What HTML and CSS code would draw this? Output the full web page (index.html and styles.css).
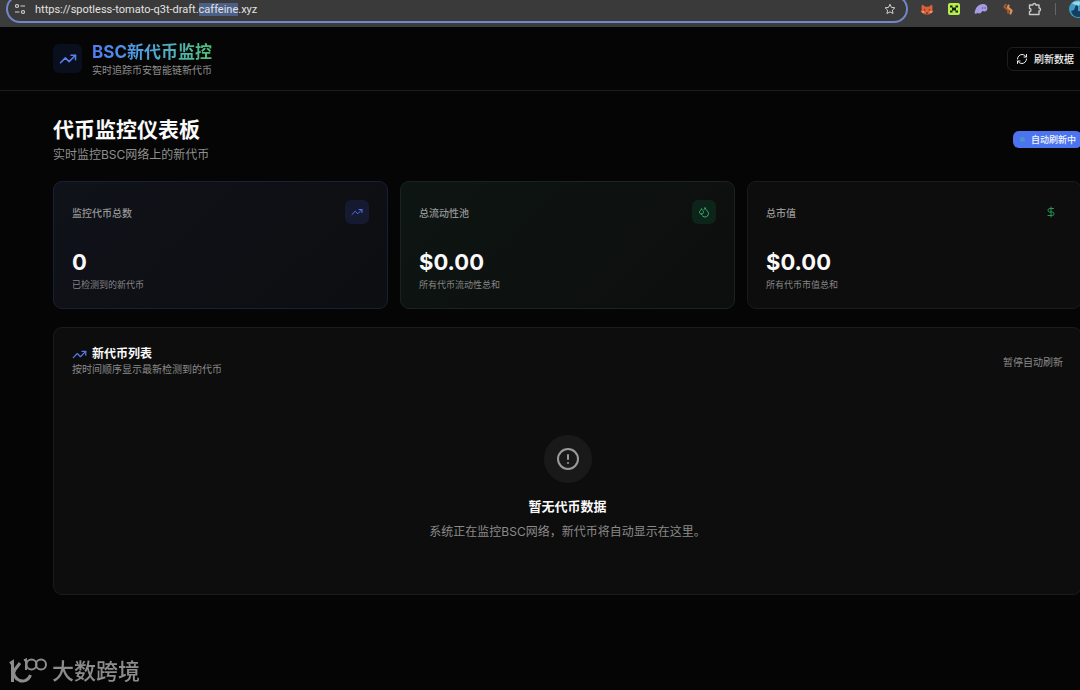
FILE: index.html
```html
<!DOCTYPE html>
<html lang="zh-CN">

<head>
    <meta charset="UTF-8">
    <meta name="viewport" content="width=device-width, initial-scale=1.0">
    <title>BSC新代币监控</title>
    <link rel="stylesheet" href="styles.css">
</head>

<body>
    <!-- shared icons -->
    <svg class="defs" aria-hidden="true">
        <symbol id="trend" viewBox="0 0 24 24">
            <path d="M16 7h6v6"/>
            <path d="m22 7-8.5 8.5-5-5L2 17"/>
        </symbol>
    </svg>

    <div class="browser">
        <div class="address">
            <svg class="tune" viewBox="0 0 12 12">
                <circle cx="3" cy="3" r="1.5"/>
                <path d="M6.500 3H11M1 9h4.500"/>
                <circle cx="9" cy="9" r="1.5"/>
            </svg>
            <input id="url" type="text" aria-label="地址" value="https://spotless-tomato-q3t-draft.caffeine.xyz" spellcheck="false">
            <svg class="star" viewBox="0 0 24 24">
                <path d="m12 2.5 2.9 6.3 6.9.8-5.1 4.7 1.4 6.8-6.1-3.4-6.1 3.4 1.4-6.8-5.1-4.7 6.9-.8z"/>
            </svg>
        </div>
        <div class="extensions">
            <svg viewBox="0 0 14 14">
                <path fill="#d9623a" d="M2 2.500l3.500 2.200h3L12 2.500l.6 3.500-.4 1.800 1.200 1.700-2.400 2L8.600 12.500H5.400L3 11.500l-2.400-2 1.200-1.700L1.400 6z"/>
                <path fill="#5c2b20" d="M3.500 7l2 .8-.6 1.200zM10.500 7l-2 .8.6 1.200zM5.800 10.500h2.400l-.5 1.200H6.300z"/>
                <path fill="#f0a070" d="M1.500 9.500l2.500-.5.500 1.500-2 .5zM12.500 9.500 10 9l-.5 1.500 2 .5z"/>
            </svg>
            <svg viewBox="0 0 14 14">
                <rect x="1" y="1" width="12" height="12" rx="2" fill="#b5ee50"/>
                <path fill="#17240a" d="M3 3.500h2.500v2H3zM8.500 3.500H11v2H8.500zM5 5.500h4v3H5zM3 8.500h2.500v2H3zM8.500 8.500H11v2H8.500z"/>
            </svg>
            <svg viewBox="0 0 14 14">
                <path fill="#a89be6" d="M.6 11.200C1.200 5.600 4.600 2 8.800 2c3.200 0 4.800 2 4.600 4.600-.2 2-1.300 3-2.800 3-1 0-1.600-.3-2-.8-.8 1.500-2 2.600-3.300 2.600-.8 0-1.200-.4-1.300-1-.8.8-1.600 1.300-2.300 1.300-.6 0-1.100-.2-1.100-.5z"/>
                <path fill="#6c62a0" d="M8.200 5h1v2h-1zM10.600 5h1v2h-1z"/>
            </svg>
            <svg viewBox="0 0 14 14">
                <path fill="none" stroke="#a5582a" stroke-width="2.200" stroke-linecap="round" d="M4.500 3 3.500 5l4 3.500-.5 2"/>
                <path fill="none" stroke="#dd9058" stroke-width="2.200" stroke-linecap="round" d="M7.500 3.500 7 5.500l3.500 3-1 3"/>
            </svg>
            <svg viewBox="0 0 14 14">
                <path fill="none" stroke="#c8c8c8" stroke-width="1.400" stroke-linejoin="round" d="M1.500 3h3.300a1.500 1.500 0 0 1 3 0H11v3a1.500 1.500 0 0 1 0 3v3.500H1.500V9.500a1.500 1.500 0 0 0 0-3z"/>
            </svg>
            <span class="divider"></span>
            <svg class="avatar" viewBox="0 0 18 18">
                <circle cx="9" cy="9" r="9" fill="#3f9cc4"/>
                <path fill="#9bd4e6" d="M3 3.500C5 1 10 .5 13 3L9 6z"/>
                <path fill="#123f63" d="M2 11l3-1 2-5 2 1v5l8 1c-1 3-4 5-8 5s-6-3-7-6z"/>
            </svg>
        </div>
    </div>

    <header class="header">
        <div class="brand">
            <span class="logo"><svg class="icon"><use href="#trend"/></svg></span>
            <div>
                <div class="brand-name">BSC新代币监控</div>
                <div class="brand-sub">实时追踪币安智能链新代币</div>
            </div>
        </div>
        <button class="refresh" type="button">
            <svg class="icon" viewBox="0 0 24 24">
                <path d="M3 12a9 9 0 0 1 9-9 9.750 9.750 0 0 1 6.740 2.740L21 8"/>
                <path d="M21 3v5h-5"/>
                <path d="M21 12a9 9 0 0 1-9 9 9.750 9.750 0 0 1-6.740-2.740L3 16"/>
                <path d="M8 16H3v5"/>
            </svg>
            刷新数据
        </button>
    </header>

    <main class="main">
        <div class="heading">
            <div>
                <h1>代币监控仪表板</h1>
                <p>实时监控BSC网络上的新代币</p>
            </div>
            <span class="badge"><i class="dot"></i>自动刷新中</span>
        </div>

        <section class="stats">
            <article class="card blue">
                <div class="card-top">
                    <h2>监控代币总数</h2>
                    <span class="card-icon"><svg class="icon"><use href="#trend"/></svg></span>
                </div>
                <div class="value">0</div>
                <p>已检测到的新代币</p>
            </article>
            <article class="card green">
                <div class="card-top">
                    <h2>总流动性池</h2>
                    <span class="card-icon">
                        <svg class="icon" viewBox="0 0 24 24">
                            <path d="M7 16.300c2.200 0 4-1.830 4-4.050 0-1.160-.57-2.260-1.710-3.190S7.290 6.750 7 5.300c-.29 1.450-1.140 2.840-2.290 3.760S3 11.100 3 12.250c0 2.220 1.800 4.050 4 4.050z"/>
                            <path d="M12.560 6.600A10.970 10.970 0 0 0 14 3.020c.5 2.500 2 4.900 4 6.500s3 3.500 3 5.500a6.980 6.980 0 0 1-11.910 4.970"/>
                        </svg>
                    </span>
                </div>
                <div class="value">$0.00</div>
                <p>所有代币流动性总和</p>
            </article>
            <article class="card">
                <div class="card-top">
                    <h2>总市值</h2>
                    <span class="card-icon money">
                        <svg class="icon" viewBox="0 0 24 24">
                            <path d="M12 2v20"/>
                            <path d="M17 5H9.500a3.500 3.500 0 0 0 0 7h5a3.500 3.500 0 0 1 0 7H6"/>
                        </svg>
                    </span>
                </div>
                <div class="value">$0.00</div>
                <p>所有代币市值总和</p>
            </article>
        </section>

        <section class="panel">
            <div class="panel-top">
                <div>
                    <h2><svg class="icon"><use href="#trend"/></svg>新代币列表</h2>
                    <p>按时间顺序显示最新检测到的代币</p>
                </div>
                <button class="pause" type="button">暂停自动刷新</button>
            </div>
            <div class="empty">
                <span class="empty-icon">
                    <svg class="icon" viewBox="0 0 24 24">
                        <circle cx="12" cy="12" r="10"/>
                        <path d="M12 8v4M12 16h.01"/>
                    </svg>
                </span>
                <h3>暂无代币数据</h3>
                <p>系统正在监控BSC网络，新代币将自动显示在这里。</p>
            </div>
        </section>
    </main>

    <div class="watermark">
        <svg viewBox="0 0 38 26">
            <path stroke-width="3" d="M1 5.500 3.500 4v20"/>
            <path stroke-width="3" d="M11 5 6 11.500c-3 4 0 9 4.500 11 4 1.500 9 0 11-5.500"/>
            <path stroke-width="2" d="M15 2.500 17 1.500V12"/>
            <circle cx="22.500" cy="6.500" r="5" stroke-width="2"/>
            <circle cx="32" cy="6.500" r="5" stroke-width="2"/>
        </svg>
        <span>大数跨境</span>
    </div>

    <script>
        // select the host name in the address bar
        const url = document.querySelector('#url');
        const start = url.value.indexOf('caffeine');
        url.focus();
        url.setSelectionRange(start, start + 8);
    </script>
</body>

</html>
```
FILE: styles.css
```css
* {
    box-sizing: border-box;
}

body {
    margin: 0;
    min-height: 100vh;
    overflow: hidden;
    background: #050505;
    color: #fafafa;
    font-family: Inter, "Noto Sans CJK SC", sans-serif;
    font-size: 12px;
}

h1, h2, h3, p {
    margin: 0;
}

button, input {
    font-family: inherit;
}

.defs {
    position: absolute;
    width: 0;
    height: 0;
}

.icon {
    width: 12px;
    height: 12px;
    flex: none;
    fill: none;
    stroke: currentColor;
    stroke-width: 2;
    stroke-linecap: round;
    stroke-linejoin: round;
}

/* browser bar */
.browser {
    display: flex;
    align-items: flex-end;
    height: 27px;
    padding: 0 0 4px 6px;
    background: #3c3c3c;
    overflow: hidden;
}

.address {
    flex: 1;
    display: flex;
    align-items: center;
    height: 28px;
    padding: 0 10px 0 6px;
    border: 2px solid #7187c9;
    border-radius: 14px;
    background: #3a3a3a;
}

.address svg {
    width: 12px;
    height: 12px;
    flex: none;
    fill: none;
    stroke: #d0d0d0;
    stroke-width: 1.2;
}

.address .star {
    stroke-width: 2;
}

.address input {
    flex: 1;
    min-width: 0;
    height: 14px;
    margin: 0 9px;
    padding: 0;
    border: 0;
    outline: 0;
    background: none;
    color: #e2e2e2;
    font-family: Roboto, sans-serif;
    font-size: 11px;
    caret-color: transparent;
}

.address input::selection {
    background: #4a6088;
    color: #e2e2e2;
}

.extensions {
    display: flex;
    align-items: center;
    gap: 13px;
    width: 172px;
    height: 28px;
    padding-left: 12px;
}

.extensions svg {
    width: 14px;
    height: 14px;
    flex: none;
}

.extensions .avatar {
    width: 18px;
    height: 18px;
}

.divider {
    flex: none;
    width: 1px;
    height: 12px;
    background: #666;
}

/* page header */
.header {
    display: flex;
    align-items: center;
    justify-content: space-between;
    height: 64px;
    padding-left: 53px;
    border-bottom: 1px solid #1c1c1c;
}

.brand {
    display: flex;
    align-items: center;
    gap: 10px;
}

.logo {
    display: flex;
    align-items: center;
    justify-content: center;
    width: 29px;
    height: 29px;
    border-radius: 6px;
    background: #0a0f1e;
    color: #5a7ef0;
}

.logo .icon {
    width: 18px;
    height: 18px;
}

.brand-name {
    width: fit-content;
    padding-top: 2px;
    font-size: 17px;
    font-weight: 700;
    line-height: 20px;
    background: linear-gradient(90deg, #4f7df5, #4fa6d8 50%, #4fc077);
    -webkit-background-clip: text;
    background-clip: text;
    color: transparent;
}

.brand-sub {
    color: #8f8f8f;
    font-size: 10px;
    line-height: 16px;
}

.refresh {
    display: flex;
    align-items: center;
    gap: 6px;
    height: 24px;
    margin-right: -4px;
    padding: 0 9px 0 8px;
    border: 1px solid #1e1e1e;
    border-radius: 6px;
    background: #050505;
    color: #f0f0f0;
    font-size: 10px;
    font-weight: 500;
    white-space: nowrap;
}

/* dashboard */
.main {
    margin: 0 -2px 0 53px;
    padding: 24px 0 95px;
}

.heading {
    display: flex;
    align-items: center;
    justify-content: space-between;
    margin-bottom: 17px;
}

.heading h1 {
    font-size: 21px;
    font-weight: 700;
    line-height: 30px;
}

.heading p {
    color: #8f8f8f;
    font-size: 12px;
    line-height: 19px;
}

.badge {
    display: flex;
    align-items: center;
    gap: 6px;
    height: 17px;
    padding: 0 6px 0 7px;
    border-radius: 6px;
    background: #4b74ee;
    color: #f4f7ff;
    font-size: 9px;
    font-weight: 500;
}

.dot {
    width: 5px;
    height: 5px;
    border-radius: 50%;
    background: #4b93cf;
}

.stats {
    display: grid;
    grid-template-columns: repeat(3, 1fr);
    gap: 12px;
    margin-bottom: 18px;
}

.card {
    padding: 18px;
    height: 128px;
    border: 1px solid #1b1b1b;
    border-radius: 9px;
    background: #0d0d0d;
}

.blue {
    border-color: #192036;
    background: linear-gradient(135deg, #10121a, #0d0e10);
}

.green {
    border-color: #17251e;
    background: linear-gradient(135deg, #0d1512, #0d0e0e);
}

.card-top {
    display: flex;
    align-items: center;
    justify-content: space-between;
    margin-bottom: 24px;
}

.card h2 {
    color: #969696;
    font-size: 10px;
    font-weight: 500;
}

.card-icon {
    display: flex;
    align-items: center;
    justify-content: center;
    width: 24px;
    height: 24px;
    border-radius: 6px;
}

.blue .card-icon {
    background: #151a31;
    color: #5572e8;
}

.green .card-icon {
    background: #0c2419;
    color: #3bb273;
}

.money {
    color: #23995a;
}

.value {
    font-size: 22px;
    font-weight: 700;
    line-height: 28px;
}

.card p {
    color: #858585;
    font-size: 9px;
    line-height: 18px;
}

/* token list */
.panel {
    min-height: 268px;
    padding: 18px;
    border: 1px solid #1b1b1b;
    border-radius: 9px;
    background: #0d0d0d;
}

.panel-top {
    display: flex;
    align-items: center;
    justify-content: space-between;
}

.panel h2 {
    display: flex;
    align-items: center;
    gap: 5px;
    font-size: 12px;
    font-weight: 700;
    line-height: 16px;
}

.panel h2 .icon {
    width: 15px;
    height: 15px;
    color: #5578e8;
}

.panel-top p {
    color: #8a8a8a;
    font-size: 10px;
    line-height: 14px;
}

.pause {
    padding: 0;
    border: 0;
    background: none;
    color: #8a8a8a;
    font-size: 10px;
}

.empty {
    display: flex;
    flex-direction: column;
    align-items: center;
    padding-top: 59px;
}

.empty-icon {
    display: flex;
    align-items: center;
    justify-content: center;
    width: 48px;
    height: 48px;
    margin-bottom: 12px;
    border-radius: 50%;
    background: #191919;
    color: #9a9a9a;
}

.empty-icon .icon {
    width: 24px;
    height: 24px;
}

.empty h3 {
    margin-bottom: 6px;
    font-size: 13px;
    font-weight: 700;
    line-height: 22px;
}

.empty p {
    color: #8a8a8a;
    font-size: 12px;
    line-height: 18px;
}

.watermark {
    position: fixed;
    left: 9px;
    bottom: 4px;
    display: flex;
    align-items: center;
    gap: 5px;
    color: #8c8c8c;
    font-size: 22px;
    font-weight: 500;
    line-height: 30px;
}

.watermark svg {
    width: 38px;
    height: 26px;
    fill: none;
    stroke: currentColor;
}
```
